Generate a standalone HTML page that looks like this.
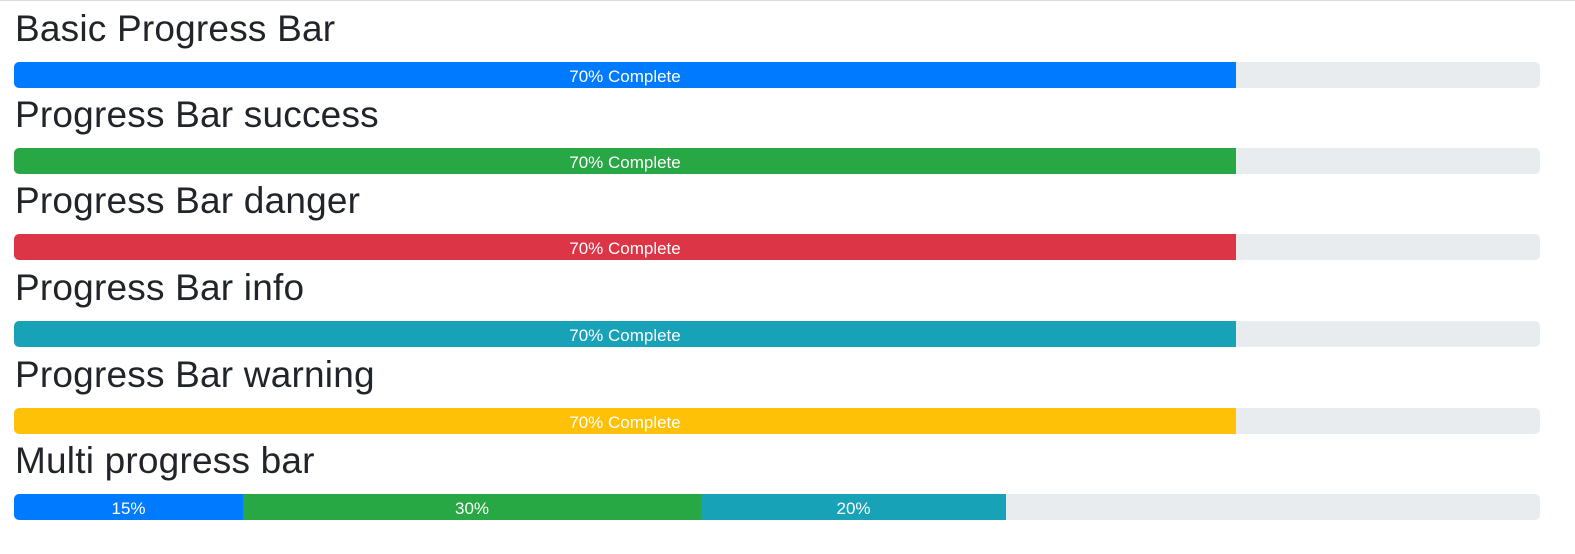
<!DOCTYPE html>
<html><head><meta charset="utf-8"><style>
html,body{margin:0;padding:0;background:#fff;width:1575px;height:554px;overflow:hidden;font-family:"Liberation Sans",sans-serif;}
.top{position:absolute;left:0;top:0;width:1575px;height:1px;background:#dcdcdc;}
h2{position:absolute;left:15px;margin:0;font-size:37px;font-weight:normal;color:#212529;line-height:40px;letter-spacing:0.2px;}
.bar{position:absolute;left:14px;width:1526px;height:26px;background:#e9ecef;border-radius:5px;overflow:hidden;display:flex;}
.bar div{height:26px;line-height:29px;color:#fff;font-size:17px;text-align:center;}
</style></head><body>
<div class="top"></div>
<h2 style="top:9px">Basic Progress Bar</h2>
<div class="bar" style="top:62px"><div style="width:1222px;background:#007bff">70% Complete</div></div>
<h2 style="top:95px">Progress Bar success</h2>
<div class="bar" style="top:148px"><div style="width:1222px;background:#28a745">70% Complete</div></div>
<h2 style="top:181px">Progress Bar danger</h2>
<div class="bar" style="top:234px"><div style="width:1222px;background:#dc3545">70% Complete</div></div>
<h2 style="top:268px">Progress Bar info</h2>
<div class="bar" style="top:321px"><div style="width:1222px;background:#17a2b8">70% Complete</div></div>
<h2 style="top:355px">Progress Bar warning</h2>
<div class="bar" style="top:408px"><div style="width:1222px;background:#ffc107">70% Complete</div></div>
<h2 style="top:441px">Multi progress bar</h2>
<div class="bar" style="top:494px"><div style="width:229px;background:#007bff">15%</div><div style="width:458px;background:#28a745">30%</div><div style="width:305px;background:#17a2b8">20%</div></div>
</body></html>
